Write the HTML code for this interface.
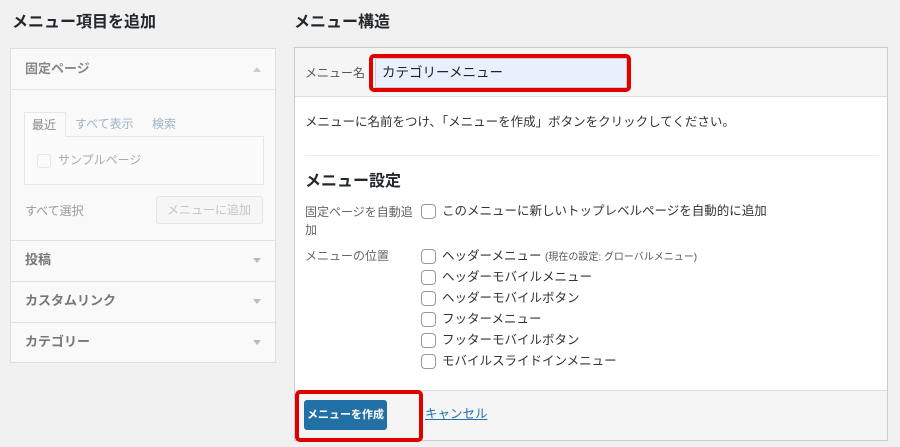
<!DOCTYPE html>
<html><head><meta charset="utf-8"><style>
*{box-sizing:border-box;margin:0;padding:0}
body{width:900px;height:447px;background:#f1f1f1;font-family:"Liberation Sans","Noto Sans CJK JP",sans-serif;color:#333;position:relative;overflow:hidden;font-size:13px;line-height:1.2}
.a{position:absolute;white-space:nowrap}
h2{position:absolute;font-size:16px;font-weight:bold;color:#23282d;line-height:1.2}
.lbox{left:10px;top:48px;width:266px;height:315px;border:1px solid #ddd;background:#f9f9f9}
.sec{position:absolute;left:0;width:264px;height:41px;border-top:1px solid #e1e1e1;font-weight:bold;color:#777;padding:11px 0 0 14px;font-size:13px}
.tri{position:absolute;right:14px;top:17px;width:0;height:0;border-left:4px solid transparent;border-right:4px solid transparent;border-top:5px solid #bbb}
.rbox{left:294px;top:47px;width:594px;height:394px;border:1px solid #ccc;background:#fff}
.cb{position:absolute;width:15px;height:15px;border:1px solid #999;border-radius:4px;background:#fff}
.red{position:absolute;border:4px solid #e00000;border-radius:5px}
.l{position:absolute;left:147px;white-space:nowrap;font-size:12.5px}
</style></head><body>
<h2 style="left:12px;top:13px">メニュー項目を追加</h2>
<h2 style="left:294px;top:13px">メニュー構造</h2>

<div class="a lbox">
  <div class="a" style="left:14px;top:12px;font-weight:bold;color:#888">固定ページ</div>
  <div class="a" style="right:14px;top:18px;width:0;height:0;border-left:4px solid transparent;border-right:4px solid transparent;border-bottom:5px solid #ccc"></div>
  <div class="a" style="left:0;top:40px;width:264px;border-top:1px solid #e6e6e6"></div>
  <div class="a" style="left:13px;top:63px;width:42px;height:25px;border:1px solid #e6e6e6;border-bottom:none;background:#fbfbfb;color:#888;padding:5px 0 0 7px;font-size:12px;z-index:2">最近</div>
  <div class="a" style="left:64px;top:68px;color:#9ab4cc;font-size:12px">すべて表示</div>
  <div class="a" style="left:141px;top:68px;color:#9ab4cc;font-size:12px">検索</div>
  <div class="a" style="left:13px;top:87px;width:240px;height:49px;border:1px solid #e6e6e6;background:#fbfbfb"></div>
  <div class="a" style="left:26px;top:105px;width:14px;height:14px;border:1px solid #e6e6e6;border-radius:3px"></div>
  <div class="a" style="left:47px;top:104px;color:#aaa;font-size:12px">サンプルページ</div>
  <div class="a" style="left:14px;top:155px;color:#999;font-size:12px">すべて選択</div>
  <div class="a" style="left:145px;top:147px;width:107px;height:28px;border:1px solid #e6e6e6;border-radius:3px;background:#f6f6f6;color:#c4c4c4;font-size:12px;padding:6px 0 0 10px">メニューに追加</div>
  <div class="sec" style="top:191px">投稿<div class="tri"></div></div>
  <div class="sec" style="top:232px">カスタムリンク<div class="tri"></div></div>
  <div class="sec" style="top:273px">カテゴリー<div class="tri"></div></div>
</div>

<div class="a rbox">
  <div class="a" style="left:0;top:0;width:592px;height:49px;background:#f5f5f5;border-bottom:1px solid #ddd"></div>
  <div class="a" style="left:10px;top:18px;color:#555;font-size:12px">メニュー名</div>
  <div class="a" style="left:80px;top:10px;width:252px;height:30px;background:#e8f0fe;border:1px solid #ccc"></div>
  <div class="red" style="left:74px;top:6px;width:262px;height:38px"></div>
  <div class="a" style="left:87px;top:17px;color:#222;font-size:13.5px">カテゴリーメニュー</div>
  <div class="a" style="left:10px;top:67px;color:#333;font-size:12.5px">メニューに名前をつけ、「メニューを作成」ボタンをクリックしてください。</div>
  <div class="a" style="left:10px;top:107px;width:574px;border-top:1px solid #eee"></div>
  <div class="a" style="left:10px;top:124px;font-size:16px;font-weight:bold;color:#23282d">メニュー設定</div>
  <div class="a" style="left:10px;top:155px;color:#666;font-size:12px;line-height:18px;white-space:normal;width:112px">固定ページを自動追<br>加</div>
  <div class="cb" style="left:126px;top:156px"></div>
  <div class="l" style="top:156px">このメニューに新しいトップレベルページを自動的に追加</div>
  <div class="a" style="left:10px;top:201px;color:#666;font-size:12px">メニューの位置</div>
  <div class="cb" style="top:201px;left:126px"></div><div class="l" style="top:201px">ヘッダーメニュー <span style="font-size:10px;color:#555">(現在の設定: グローバルメニュー)</span></div>
  <div class="cb" style="top:222px;left:126px"></div><div class="l" style="top:222px">ヘッダーモバイルメニュー</div>
  <div class="cb" style="top:243px;left:126px"></div><div class="l" style="top:243px">ヘッダーモバイルボタン</div>
  <div class="cb" style="top:264px;left:126px"></div><div class="l" style="top:264px">フッターメニュー</div>
  <div class="cb" style="top:285px;left:126px"></div><div class="l" style="top:285px">フッターモバイルボタン</div>
  <div class="cb" style="top:306px;left:126px"></div><div class="l" style="top:306px">モバイルスライドインメニュー</div>
  <div class="a" style="left:0;top:342px;width:592px;height:50px;background:#f5f5f5;border-top:1px solid #ddd"></div>
  <div class="a" style="left:9px;top:352px;width:83px;height:30px;background:#2271a6;border-radius:3px;color:#fff;font-weight:bold;font-size:11px;line-height:30px;text-align:center">メニューを作成</div>
  <div class="red" style="left:0;top:342px;width:128px;height:52px"></div>
  <div class="a" style="left:130px;top:359px;color:#2271b1;text-decoration:underline;font-size:12.5px">キャンセル</div>
</div>
</body></html>
